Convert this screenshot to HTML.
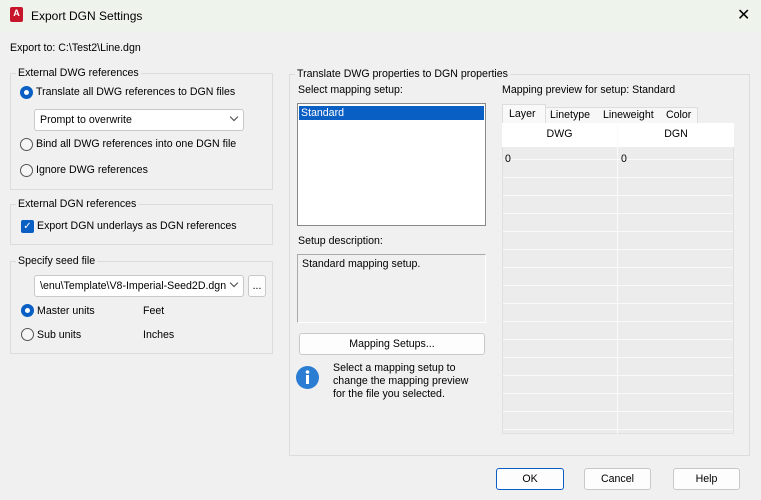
<!DOCTYPE html>
<html><head><style>
*{box-sizing:border-box;margin:0;padding:0}
body{width:761px;height:500px;background:#f0f0f0;font-family:"Liberation Sans",sans-serif;font-size:10.6px;color:#000;position:relative;overflow:hidden}
.a{position:absolute;white-space:nowrap}
.grp{position:absolute;border:1px solid #dcdcdc}
.lbl{position:absolute;background:#f0f0f0;padding:0 2px}
.rad{position:absolute;width:13px;height:13px;border-radius:50%;border:1px solid #555;background:#f6f6f6}
.rad.on{border:4px solid #0a5fc4;background:#fff}
.combo{position:absolute;background:#fff;border:1px solid #c8c8c8;border-radius:3px;height:22px;padding:4px 5px}
.btn{position:absolute;background:#fdfdfd;border:1px solid #c8c8c8;border-radius:3px;height:22px;text-align:center;line-height:20px}
.chev{position:absolute;right:6px;top:4px;width:6px;height:6px;border-right:1px solid #444;border-bottom:1px solid #444;transform:rotate(45deg)}
</style></head><body>
<div class="a" style="left:0;top:0;width:761px;height:32px;background:#eef3ec"></div>
<div class="a" style="left:10px;top:7px;width:13px;height:15px;background:#c7162b;border-radius:2px;color:#fff;font-size:9px;font-weight:bold;text-align:center;line-height:12px">A</div>
<div class="a" style="left:31px;top:9px;font-size:12px">Export DGN Settings</div>
<div class="a" style="left:737px;top:5px;font-size:16px">✕</div>
<div class="a" style="left:10px;top:42px">Export to: C:\Test2\Line.dgn</div>

<div class="grp" style="left:10px;top:73px;width:263px;height:117px"></div>
<div class="lbl" style="left:16px;top:67px">External DWG references</div>
<div class="rad on" style="left:20px;top:86px"></div><div class="a" style="left:36px;top:86px">Translate all DWG references to DGN files</div>
<div class="combo" style="left:34px;top:109px;width:210px">Prompt to overwrite<div class="chev"></div></div>
<div class="rad" style="left:20px;top:138px"></div><div class="a" style="left:36px;top:138px">Bind all DWG references into one DGN file</div>
<div class="rad" style="left:20px;top:164px"></div><div class="a" style="left:36px;top:164px">Ignore DWG references</div>

<div class="grp" style="left:10px;top:204px;width:263px;height:41px"></div>
<div class="lbl" style="left:16px;top:198px">External DGN references</div>
<div class="a" style="left:21px;top:220px;width:13px;height:13px;background:#0a5fc4;border-radius:2px;color:#fff;font-size:10px;text-align:center;line-height:13px">✓</div>
<div class="a" style="left:37px;top:220px">Export DGN underlays as DGN references</div>

<div class="grp" style="left:10px;top:261px;width:263px;height:93px"></div>
<div class="lbl" style="left:16px;top:255px">Specify seed file</div>
<div class="combo" style="left:34px;top:275px;width:210px;overflow:hidden">\enu\Template\V8-Imperial-Seed2D.dgn<div class="chev" style="background:#fff;box-shadow:0 0 0 3px #fff"></div></div>
<div class="btn" style="left:248px;top:275px;width:18px;height:22px">...</div>
<div class="rad on" style="left:21px;top:304px"></div><div class="a" style="left:37px;top:305px">Master units</div><div class="a" style="left:143px;top:305px">Feet</div>
<div class="rad" style="left:21px;top:328px"></div><div class="a" style="left:37px;top:329px">Sub units</div><div class="a" style="left:143px;top:329px">Inches</div>

<div class="grp" style="left:289px;top:74px;width:461px;height:382px"></div>
<div class="lbl" style="left:295px;top:68px">Translate DWG properties to DGN properties</div>
<div class="a" style="left:298px;top:84px">Select mapping setup:</div>
<div class="a" style="left:297px;top:103px;width:189px;height:123px;background:#fff;border:1px solid #888"></div>
<div class="a" style="left:299px;top:106px;width:185px;height:14px;background:#0a5fc4;color:#fff;padding-left:2px;line-height:14px">Standard</div>
<div class="a" style="left:298px;top:235px">Setup description:</div>
<div class="a" style="left:297px;top:254px;width:189px;height:69px;border:1px solid #aaa;border-right-color:#fff;border-bottom-color:#fff;padding:3px 4px">Standard mapping setup.</div>
<div class="btn" style="left:299px;top:333px;width:186px">Mapping Setups...</div>
<svg class="a" style="left:295px;top:365px" width="25" height="25"><circle cx="12.5" cy="12.5" r="11.5" fill="#2b7cd3"/><circle cx="12.5" cy="7" r="1.8" fill="#fff"/><rect x="11" y="10" width="3" height="9" fill="#fff"/></svg>
<div class="a" style="left:333px;top:362px;line-height:13px">Select a mapping setup to<br>change the mapping preview<br>for the file you selected.</div>

<div class="a" style="left:502px;top:84px">Mapping preview for setup: Standard</div>
<div class="a" style="left:545px;top:107px;width:153px;height:17px;background:#f7f7f7;border:1px solid #ddd"></div>
<div class="a" style="left:502px;top:104px;width:44px;height:20px;background:#f9f9f9;border:1px solid #ddd;border-bottom:none;padding:3px 6px">Layer</div>
<div class="a" style="left:550px;top:109px">Linetype</div>
<div class="a" style="left:603px;top:109px">Lineweight</div>
<div class="a" style="left:666px;top:109px">Color</div>
<div class="a" style="left:502px;top:123px;width:232px;height:311px;background:repeating-linear-gradient(#ececec 0 17px,#fafafa 17px 18px);border:1px solid #e0e0e0"></div>
<div class="a" style="left:502px;top:123px;width:232px;height:24px;background:#fff"></div>
<div class="a" style="left:617px;top:123px;width:1px;height:311px;background:#fafafa"></div>
<div class="a" style="left:502px;top:128px;width:115px;text-align:center">DWG</div>
<div class="a" style="left:618px;top:128px;width:116px;text-align:center">DGN</div>
<div class="a" style="left:505px;top:153px">0</div><div class="a" style="left:621px;top:153px">0</div>

<div class="btn" style="left:496px;top:468px;width:68px;border:1px solid #0a5fc4">OK</div>
<div class="btn" style="left:584px;top:468px;width:67px">Cancel</div>
<div class="btn" style="left:673px;top:468px;width:67px">Help</div>
</body></html>
